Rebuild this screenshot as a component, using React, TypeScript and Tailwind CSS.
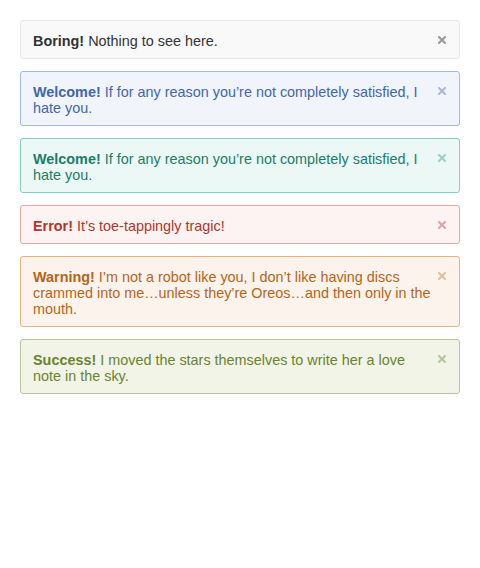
type Tone = {
    box: string;
    text: string;
    close: string;
};

const tones: Record<string, Tone> = {
    plain: { box: "bg-[#f9f9f9] border-[#e6e6e6]", text: "text-[#333333]", close: "text-[#9a9a9a]" },
    info: { box: "bg-[#f2f4fb] border-[#a6b9df]", text: "text-[#3f67ae]", close: "text-[#a9b7d8]" },
    teal: { box: "bg-[#ecf8f5] border-[#86cfbd]", text: "text-[#1b7d69]", close: "text-[#93d2c2]" },
    error: { box: "bg-[#fdf3f2] border-[#e2aaa2]", text: "text-[#b0362b]", close: "text-[#d9a59d]" },
    warning: { box: "bg-[#fcf3ec] border-[#e8b47c]", text: "text-[#b5651b]", close: "text-[#dcc09c]" },
    success: { box: "bg-[#f1f4e6] border-[#b7c69a]", text: "text-[#6a832f]", close: "text-[#b7c59b]" },
};

interface AlertProps {
    tone: keyof typeof tones;
    title: string;
    children: string;
}

function Alert(props: Readonly<AlertProps>) {
    const t = tones[props.tone];
    return (
        <div className={`relative rounded-[3px] border pt-[12px] pb-[9px] pl-3 pr-[26px] ${t.box}`}>
            <p className={`text-[14.4px] leading-4 ${t.text}`}>
                <strong className="font-bold">{props.title}</strong> {props.children}
            </p>
            <span className={`absolute right-[13px] top-[15px] ${t.close}`}>
                <svg width="8" height="8" viewBox="0 0 8 8">
                    <path d="M1 1L7 7M7 1L1 7" stroke="currentColor" strokeWidth="2" strokeLinecap="square" />
                </svg>
            </span>
        </div>
    );
}

export default function App() {
    return (
        <div className="min-h-[568px] bg-white p-5 font-['Liberation_Sans',Arial,sans-serif]">
            <div className="flex flex-col gap-[12px]">
                <Alert tone="plain" title="Boring!">Nothing to see here.</Alert>
                <Alert tone="info" title="Welcome!">If for any reason you’re not completely satisfied, I hate you.</Alert>
                <Alert tone="teal" title="Welcome!">If for any reason you’re not completely satisfied, I hate you.</Alert>
                <Alert tone="error" title="Error!">It’s toe-tappingly tragic!</Alert>
                <Alert tone="warning" title="Warning!">I’m not a robot like you, I don’t like having discs crammed into me…unless they’re Oreos…and then only in the mouth.</Alert>
                <Alert tone="success" title="Success!">I moved the stars themselves to write her a love note in the sky.</Alert>
            </div>
        </div>
    );
}
